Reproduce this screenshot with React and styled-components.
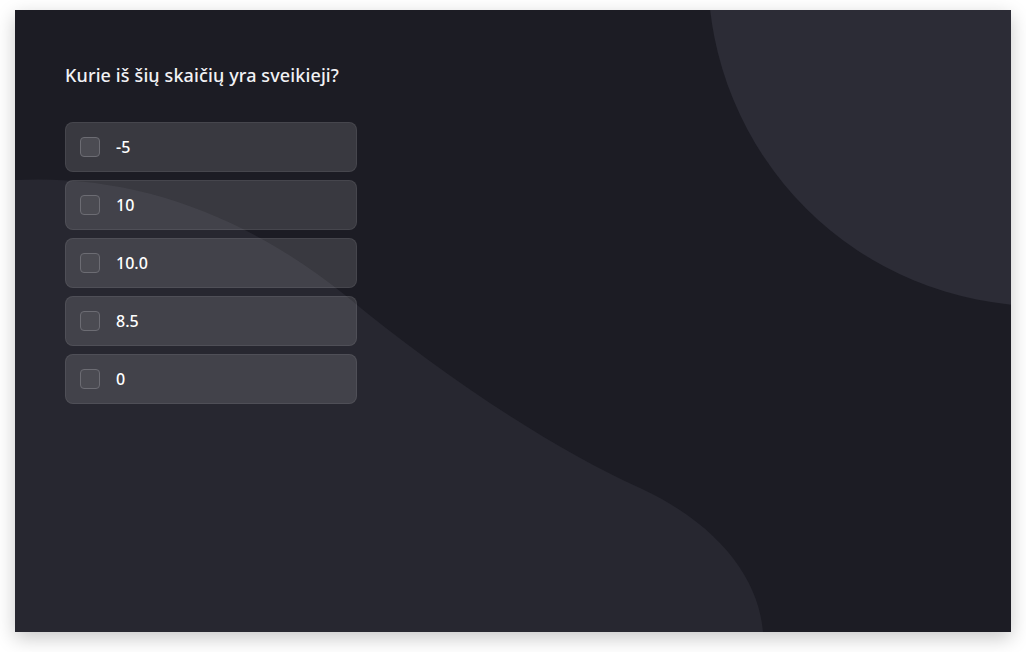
import React from 'react';
import styled, { createGlobalStyle } from 'styled-components';

const GlobalStyle = createGlobalStyle`
  body {
    margin: 0;
    background: #ffffff;
    font-family: "Noto Sans", "Open Sans", sans-serif;
  }
`;

const Page = styled.div`
  padding: 10px 15px 0 15px;
  height: 652px;
  box-sizing: border-box;
`;

const Card = styled.div`
  position: relative;
  width: 996px;
  height: 622px;
  background: #1c1c24;
  overflow: hidden;
  box-shadow: 0 6px 18px rgba(0, 0, 0, 0.22);
`;

const Backdrop = styled.svg`
  position: absolute;
  inset: 0;
  width: 100%;
  height: 100%;
`;

const Content = styled.div`
  position: relative;
  padding: 53px 50px 0 50px;
  display: flex;
  flex-direction: column;
`;

const Question = styled.h2`
  margin: 0 0 35px 0;
  font-size: 18px;
  font-weight: 500;
  letter-spacing: 0.12px;
  line-height: 24px;
  color: #f2f2f5;
`;

const OptionList = styled.div`
  display: flex;
  flex-direction: column;
  gap: 8px;
  width: 292px;
`;

const Option = styled.label`
  display: flex;
  align-items: center;
  gap: 16px;
  height: 50px;
  box-sizing: border-box;
  padding: 0 14px;
  border-radius: 8px;
  background: rgba(255, 255, 255, 0.13);
  border: 1px solid rgba(255, 255, 255, 0.07);
  cursor: pointer;
`;

const Box = styled.span`
  width: 20px;
  height: 20px;
  box-sizing: border-box;
  border-radius: 4px;
  background: #4b4b52;
  border: 1.5px solid #6c6c73;
`;

const Label = styled.span`
  font-size: 16px;
  font-weight: 500;
  color: #ffffff;
`;

const options = ['-5', '10', '10.0', '8.5', '0'];

export default function App() {
  return (
    <Page>
      <GlobalStyle />
      <Card>
        <Backdrop viewBox="0 0 996 622" preserveAspectRatio="none">
          <circle cx="1027" cy="-38" r="334" fill="#2c2c36" />
          <path
            d="M0,170 C120,164 230,205 330,285 C430,368 540,440 625,478 C705,515 744,570 748,622 L0,622 Z"
            fill="#272730"
          />
        </Backdrop>
        <Content>
          <Question>Kurie iš šių skaičių yra sveikieji?</Question>
          <OptionList>
            {options.map((o) => (
              <Option key={o}>
                <Box />
                <Label>{o}</Label>
              </Option>
            ))}
          </OptionList>
        </Content>
      </Card>
    </Page>
  );
}
